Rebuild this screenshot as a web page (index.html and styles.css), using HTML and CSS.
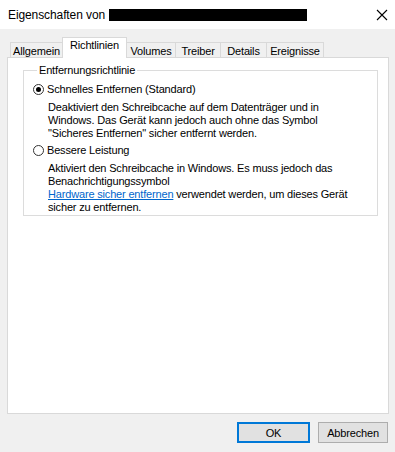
FILE: index.html
```html
<!DOCTYPE html>
<html lang="de">
<head>
<meta charset="utf-8">
<title>Eigenschaften</title>
<link rel="stylesheet" href="styles.css">
</head>
<body>
<div class="window">
  <div class="titlebar">
    <span class="title">Eigenschaften von</span>
    <span class="redacted"></span>
    <span class="close">
      <svg width="12" height="12" viewBox="0 0 12 12"><path d="M1 1 L11 11 M11 1 L1 11" stroke="#000" stroke-width="1.1" fill="none"/></svg>
    </span>
  </div>
  <div class="content">
    <div class="tabs">
      <div class="tab w1">Allgemein</div>
      <div class="tab active w2">Richtlinien</div>
      <div class="tab w3">Volumes</div>
      <div class="tab w4">Treiber</div>
      <div class="tab w5">Details</div>
      <div class="tab w6">Ereignisse</div>
    </div>
    <div class="panel">
      <fieldset class="group">
        <legend>Entfernungsrichtlinie</legend>
        <div class="option">
          <span class="radio checked"></span>
          <span class="label">Schnelles Entfernen (Standard)</span>
        </div>
        <p class="desc">Deaktiviert den Schreibcache auf dem Datenträger und in Windows. Das Gerät kann jedoch auch ohne das Symbol "Sicheres Entfernen" sicher entfernt werden.</p>
        <div class="option second">
          <span class="radio"></span>
          <span class="label">Bessere Leistung</span>
        </div>
        <p class="desc">Aktiviert den Schreibcache in Windows. Es muss jedoch das Benachrichtigungssymbol<br><a class="link" href="#">Hardware sicher entfernen</a> verwendet werden, um dieses Gerät<br>sicher zu entfernen.</p>
      </fieldset>
    </div>
    <div class="buttons">
      <button class="btn default">OK</button>
      <button class="btn">Abbrechen</button>
    </div>
  </div>
</div>
</body>
</html>
```

FILE: styles.css
```css
html, body {
  margin: 0;
  padding: 0;
}
body {
  background: #f0f0f0;
  font-family: "Liberation Sans", Arial, sans-serif;
  font-size: 11px;
  letter-spacing: -0.17px;
  color: #000;
}
.window {
  width: 395px;
  height: 452px;
  display: flex;
  flex-direction: column;
}
.titlebar {
  height: 29px;
  background: #fff;
  display: flex;
  align-items: center;
  padding-left: 8px;
}
.title {
  font-size: 12px;
  letter-spacing: -0.1px;
}
.redacted {
  display: inline-block;
  width: 198px;
  height: 12px;
  background: #000;
  margin-left: 4px;
}
.close {
  margin-left: auto;
  margin-right: 7px;
  width: 12px;
  height: 12px;
  display: flex;
}
.content {
  padding: 8px 6px 0 7px;
  display: flex;
  flex-direction: column;
}
.tabs {
  display: flex;
  align-items: flex-end;
  height: 20px;
  padding-left: 3px;
  position: relative;
  z-index: 1;
}
.tab {
  height: 15px;
  line-height: 14px;
  border: 1px solid #d9d9d9;
  border-bottom: none;
  border-left: none;
  background: #f0f0f0;
  box-sizing: border-box;
  text-align: center;
  padding-top: 1px;
}
.tab.w1 { width: 53px; border-left: 1px solid #d9d9d9; }
.tab.w2 { width: 65px; }
.tab.w3 { width: 49px; }
.tab.w4 { width: 45px; }
.tab.w5 { width: 46px; }
.tab.w6 { width: 57px; }
.tab.active {
  height: 21px;
  background: #fff;
  margin-bottom: -1px;
  line-height: 15px;
  padding-top: 0;
  border-left: 1px solid #d9d9d9;
  margin-left: -1px;
}
.panel {
  height: 357px;
  box-sizing: border-box;
  background: #fff;
  border: 1px solid #d9d9d9;
  padding: 6px 10px 0 15px;
}
.group {
  margin: 0;
  border: 1px solid #dcdcdc;
  padding: 5px 8px 0 9px;
  height: 152px;
  box-sizing: border-box;
}
.group legend {
  padding: 0 2px;
  margin-left: 4px;
  line-height: 13px;
}
.option {
  display: flex;
  align-items: center;
  height: 14px;
}
.option.second {
  margin-top: 3px;
}
.radio {
  width: 11px;
  height: 11px;
  border: 1px solid #333;
  border-radius: 50%;
  box-sizing: border-box;
  display: flex;
  align-items: center;
  justify-content: center;
  margin-right: 3px;
  background: #fff;
}
.radio.checked::after {
  content: "";
  width: 5px;
  height: 5px;
  border-radius: 50%;
  background: #000;
}
.desc {
  margin: 5px 0 0 15px;
  line-height: 13px;
  width: 300px;
}
.link {
  color: #0066cc;
  text-decoration: underline;
}
.buttons {
  display: flex;
  justify-content: flex-end;
  gap: 8px;
  margin-top: 8px;
  padding-right: 1px;
}
.btn {
  font-family: "Liberation Sans", Arial, sans-serif;
  font-size: 11px;
  letter-spacing: -0.17px;
  height: 21px;
  width: 73px;
  background: #e1e1e1;
  border: 1px solid #adadad;
  color: #000;
  padding: 0;
  box-sizing: border-box;
}
.btn.default {
  border: 2px solid #0078d7;
}
.btn + .btn {
  width: 70px;
}
```
